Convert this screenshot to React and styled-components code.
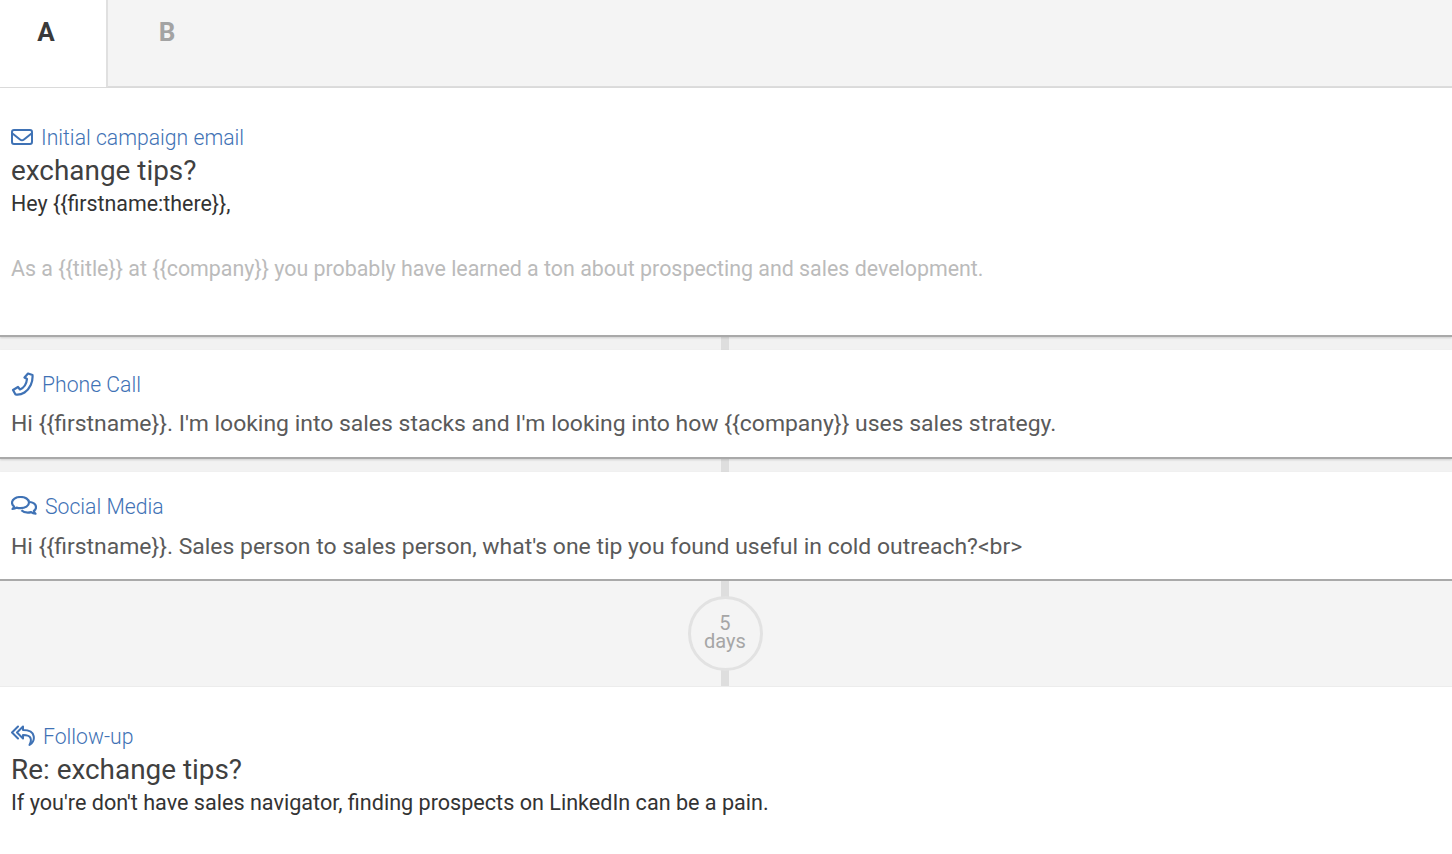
import React from 'react';
import styled, { createGlobalStyle } from 'styled-components';

const Global = createGlobalStyle`
  html, body { margin: 0; padding: 0; background: #fff; }
  body { font-family: Roboto, "Liberation Sans", sans-serif; color: #444; -webkit-font-smoothing: antialiased; }
`;

const Page = styled.div`
  width: 1452px;
  height: 854px;
  overflow: hidden;
  background: #f4f4f4;
`;

const Tabs = styled.div`
  display: flex;
  height: 86px;
  border-bottom: 2px solid #dcdcdc;
  background: #f4f4f4;
`;

const Tab = styled.div`
  width: ${(p) => (p.$active ? '108px' : '118px')};
  height: ${(p) => (p.$active ? '87px' : '86px')};
  padding: 16px ${(p) => (p.$active ? '14px' : '0')} 0 0;
  box-sizing: border-box;
  text-align: center;
  font-size: 26px;
  line-height: 32px;
  font-weight: 700;
  color: ${(p) => (p.$active ? '#3a3a3a' : '#a3a3a3')};
  background: ${(p) => (p.$active ? '#fff' : 'transparent')};
  border-right: ${(p) => (p.$active ? '2px solid #e0e0e0' : 'none')};
`;

const Card = styled.section`
  height: ${(p) => p.$height}px;
  padding: ${(p) => p.$top}px 11px 0;
  box-sizing: border-box;
  background: #fff;
  border-bottom: ${(p) => (p.$flat ? 'none' : '2px solid #a9a9a9')};
  box-shadow: ${(p) => (p.$flat ? 'none' : '0 1px 2px rgba(0, 0, 0, 0.15)')};
  position: relative;
`;

const Label = styled.div`
  display: flex;
  align-items: center;
  gap: 8px;
  height: 24px;
  font-size: 21.2px;
  font-weight: 300;
  color: #3f72b5;

  svg { flex: none; display: block; }
`;

const Subject = styled.div`
  font-size: 27.9px;
  line-height: 36px;
  margin-top: 4px;
  color: #404040;
`;

const Body = styled.div`
  font-size: ${(p) => p.$size || 21.4}px;
  line-height: 30px;
  color: ${(p) => p.$color || '#333'};
  margin-top: ${(p) => p.$mt || 0}px;
  white-space: nowrap;
`;

const Gap = styled.div`
  height: ${(p) => p.$height}px;
  display: flex;
  justify-content: center;
  padding-right: 2px;
  background: #f2f2f2;
`;

const Line = styled.div`
  width: 8px;
  height: 100%;
  background: #dedede;
`;

const Delay = styled.div`
  position: relative;
  height: 105px;
  display: flex;
  align-items: center;
  justify-content: center;
  padding-right: 2px;
  background: #f4f4f4;
  border-bottom: 1px solid #ececec;
`;

const DelayLine = styled(Line)`
  position: absolute;
  top: 0;
  left: 721px;
`;

const Circle = styled.div`
  position: relative;
  width: 75px;
  height: 75px;
  box-sizing: border-box;
  padding-bottom: 4px;
  border: 3px solid #e2e2e2;
  border-radius: 50%;
  background: #f4f4f4;
  color: #a6a6a6;
  font-size: 20px;
  line-height: 18px;
  text-align: center;
  display: flex;
  align-items: center;
  justify-content: center;
`;

const EnvelopeIcon = () => (
  <svg width="22" height="16" viewBox="0 0 22 16" fill="none" stroke="#3f72b5" strokeWidth="2">
    <rect x="1" y="1" width="20" height="14" rx="2" />
    <path d="M1.5 4.5 9 10.5c1.2 1 2.8 1 4 0l7.5-6" />
  </svg>
);

const PhoneIcon = () => (
  <svg width="23" height="24" viewBox="0 0 23 24" fill="none" stroke="#3f72b5" strokeWidth="2.2" strokeLinejoin="round">
    <path d="M17 1.5 21.5 3c.6 7-2.600 14-8 17.500-3 1.900-6 2.500-9 2L2 18l5-3 2 2.500c3.500-1.500 6.500-5.500 7-10.500l-2.500-1.500z" />
  </svg>
);

const ChatIcon = () => (
  <svg width="26" height="20" viewBox="0 0 26 20" fill="none" stroke="#3f72b5" strokeWidth="2.2" strokeLinejoin="round">
    <path d="M9.500 1C4.800 1 1 3.500 1 6.700c0 1.500.8 2.800 2.100 3.800-.2 1-.8 1.800-1.600 2.500 1.600-.1 3-.6 4.100-1.400 1.200.4 2.500.6 3.900.6 4.700 0 8.500-2.500 8.500-5.700S14.200 1 9.500 1z" />
    <path d="M19 6c3.400.6 6 2.600 6 5.200 0 1.400-.8 2.700-2.100 3.700.2 1 .8 2 1.600 2.800-1.700-.1-3.200-.7-4.300-1.600-1.100.3-2.200.5-3.400.5-2.700 0-5-.9-6.400-2.300" />
  </svg>
);

const ReplyIcon = () => (
  <svg width="24" height="22" viewBox="0 0 24 22" fill="none" stroke="#3f72b5" strokeWidth="2" strokeLinejoin="round" strokeLinecap="round">
    <path d="M7 1.500 1 7.500l6 6" />
    <path d="M12 1.500 6 7.500l6 6V10c4 0 6.500 .6 7.500 3 .8 2.200.4 4.500-1 7 3.200-2 4.800-5.500 4.200-8.800C22 7 18 5 12 5z" />
  </svg>
);

export default function App() {
  return (
    <Page>
      <Global />
      <Tabs>
        <Tab $active>A</Tab>
        <Tab>B</Tab>
      </Tabs>
      <Card $height={249} $top={37}>
        <Label><EnvelopeIcon />Initial campaign email</Label>
        <Subject>exchange tips?</Subject>
        <Body>Hey {'{{firstname:there}}'},</Body>
        <Body $color="#bbb" $mt={35}>As a {'{{title}}'} at {'{{company}}'} you probably have learned a ton about prospecting and sales development.</Body>
      </Card>
      <Gap $height={13}><Line /></Gap>
      <Card $height={109} $top={22}>
        <Label><PhoneIcon />Phone Call</Label>
        <Body $size={22.95} $color="#5a5a5a" $mt={13}>Hi {'{{firstname}}'}. I'm looking into sales stacks and I'm looking into how {'{{company}}'} uses sales strategy.</Body>
      </Card>
      <Gap $height={13}><Line /></Gap>
      <Card $height={109} $top={22}>
        <Label><ChatIcon />Social Media</Label>
        <Body $size={22.95} $color="#5a5a5a" $mt={14}>Hi {'{{firstname}}'}. Sales person to sales person, what's one tip you found useful in cold outreach?&lt;br&gt;</Body>
      </Card>
      <Delay>
        <DelayLine />
        <Circle><div>5<br />days</div></Circle>
      </Delay>
      <Card $flat $height={168} $top={37}>
        <Label><ReplyIcon />Follow-up</Label>
        <Subject>Re: exchange tips?</Subject>
        <Body $size={21.6}>If you're don't have sales navigator, finding prospects on LinkedIn can be a pain.</Body>
      </Card>
    </Page>
  );
}
